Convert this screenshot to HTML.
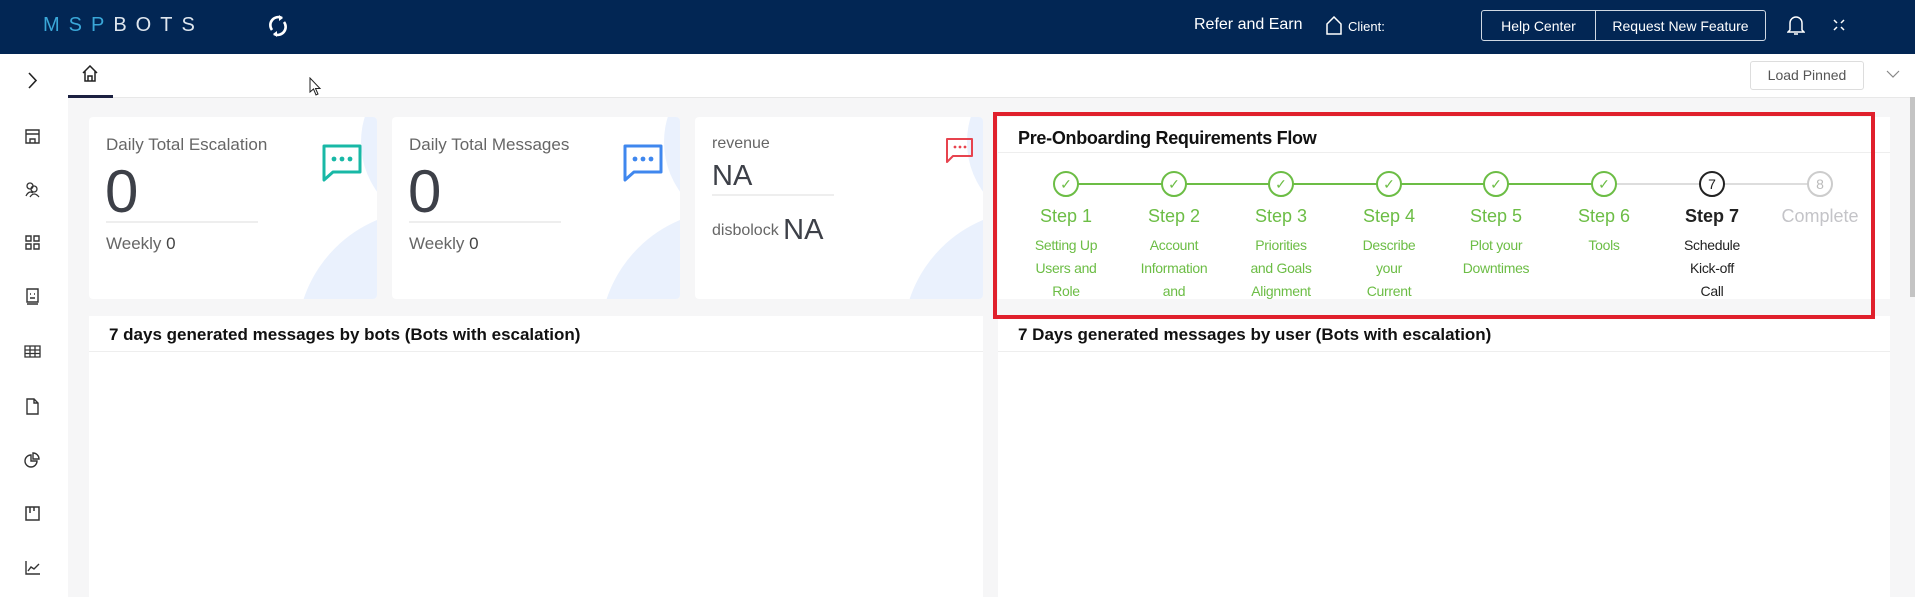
<!DOCTYPE html>
<html><head><meta charset="utf-8"><style>
*{box-sizing:border-box;margin:0;padding:0}
html,body{width:1915px;height:597px;overflow:hidden}
body{background:#f6f6f7;font-family:"Liberation Sans",sans-serif;position:relative}
.abs{position:absolute}
.nav{left:0;top:0;width:1915px;height:54px;background:#022654}
.side{left:0;top:54px;width:68px;height:543px;background:#fff}
.tabs{left:68px;top:54px;width:1847px;height:44px;background:#fff;border-bottom:1px solid #e8e8e8}
.card{background:#fff;border-radius:4px;overflow:hidden}
.t{color:#666;font-size:17px}
.big{color:#3d4048;font-size:60px;line-height:1}
.step{position:absolute;width:110px;text-align:center;margin-left:-55px}
.step .c{width:26px;height:26px;border:2px solid #6cbd45;border-radius:50%;margin:0 auto;color:#6cbd45;font-size:14px;line-height:22px;background:#fff}
.step .l{font-size:18px;color:#6cbd45;margin-top:9px;height:28px}
.step .d{font-size:14px;color:#6cbd45;line-height:23px;letter-spacing:-0.3px}
.si{position:absolute;left:24px;width:17px;height:17px}
.c1{position:absolute;left:272px;top:-60px;width:170px;height:170px;border-radius:50%;background:#eaf1fd}
.c2{position:absolute;left:208px;top:93px;width:260px;height:260px;border-radius:50%;background:#eaf1fd}
</style></head><body>
<div class="abs nav">
 <div class="abs" style="left:43px;top:14px;font-size:20px;letter-spacing:9px;color:#3aa7d8">MSP<span style="color:#dfe6ee">BOTS</span></div>
 <svg class="abs" style="left:268px;top:13px" width="20" height="26" viewBox="0 0 20 26"><path d="M14 5 A8 8 0 0 0 4 17 M6 21 A8 8 0 0 0 16 9" fill="none" stroke="#fff" stroke-width="2.6"/><path d="M11 2 L15 5 L11 8Z M9 24 L5 21 L9 18Z" fill="#fff"/></svg>
 <div class="abs" style="left:1194px;top:16px;color:#fff;font-size:16px">Refer and Earn</div>
 <svg class="abs" style="left:1326px;top:16px" width="16" height="19" viewBox="0 0 16 19"><path d="M1 8 L8 1 L15 8 V18 H1Z" fill="none" stroke="#fff" stroke-width="1.5"/></svg>
 <div class="abs" style="left:1348px;top:19px;color:#fff;font-size:13px">Client:</div>
 <div class="abs" style="left:1481px;top:10px;width:285px;height:31px;border:1px solid #cfd8e3;border-radius:3px;color:#fff;font-size:14px">
  <span class="abs" style="left:0;width:113px;top:7px;text-align:center">Help Center</span>
  <span class="abs" style="left:113px;top:0;height:29px;border-left:1px solid #cfd8e3"></span>
  <span class="abs" style="left:113px;width:171px;top:7px;text-align:center">Request New Feature</span>
 </div>
 <svg class="abs" style="left:1787px;top:14px" width="18" height="22" viewBox="0 0 18 22"><path d="M3 16 V9 A6 6 0 0 1 15 9 V16 L17 18 H1Z M7 20 H11" fill="none" stroke="#fff" stroke-width="1.5"/></svg>
 <svg class="abs" style="left:1833px;top:19px" width="12" height="12" viewBox="0 0 12 12"><path d="M1 1 L4 4 M11 1 L8 4 M1 11 L4 8 M11 11 L8 8" stroke="#fff" stroke-width="1.5"/></svg>
</div>
<div class="abs side">
 <svg class="si" style="top:18px" viewBox="0 0 17 17"><path d="M5 1 L12 8.5 L5 16" fill="none" stroke="#222" stroke-width="1.6"/></svg>
 <svg class="si" style="top:74px" viewBox="0 0 17 17"><path d="M2 2 H15 V15 H2Z M2 6 H15 M6 15 V11 H11 V15" fill="none" stroke="#333" stroke-width="1.4"/></svg>
 <svg class="si" style="top:127px" viewBox="0 0 17 17"><circle cx="6" cy="5" r="3" fill="none" stroke="#333" stroke-width="1.3"/><circle cx="10" cy="8" r="3" fill="none" stroke="#333" stroke-width="1.3"/><path d="M2 15 Q5 9 9 12 M6 16 Q10 10 15 16" fill="none" stroke="#333" stroke-width="1.3"/></svg>
 <svg class="si" style="top:180px" viewBox="0 0 17 17"><path d="M2 2H7V7H2Z M10 2H15V7H10Z M2 10H7V15H2Z M10 10H15V15H10Z" fill="none" stroke="#333" stroke-width="1.4"/></svg>
 <svg class="si" style="top:234px" viewBox="0 0 17 17"><path d="M3 1H14V14H3Z M3 16H14" fill="none" stroke="#333" stroke-width="1.4"/><path d="M6 6H7M10 6H11M6 10H11" stroke="#333" stroke-width="1.4"/></svg>
 <svg class="si" style="top:289px" viewBox="0 0 17 17"><path d="M1 3H16V14H1Z M1 7H16 M1 10.5H16 M6 3V14 M11 3V14" fill="none" stroke="#333" stroke-width="1.3"/></svg>
 <svg class="si" style="top:344px" viewBox="0 0 17 17"><path d="M3 1H10L14 5V16H3Z M10 1V5H14" fill="none" stroke="#333" stroke-width="1.4"/></svg>
 <svg class="si" style="top:397px" viewBox="0 0 17 17"><path d="M7 4 A6 6 0 1 0 13 10 H7Z M9 2 A6 6 0 0 1 15 8 H9Z" fill="none" stroke="#333" stroke-width="1.4"/></svg>
 <svg class="si" style="top:451px" viewBox="0 0 17 17"><path d="M2 2H15V15H2Z M6 2V8 M10 2V6" fill="none" stroke="#333" stroke-width="1.5"/></svg>
 <svg class="si" style="top:505px" viewBox="0 0 17 17"><path d="M2 2V15H16 M4 12 L7 8 L10 10 L15 5" fill="none" stroke="#333" stroke-width="1.4"/></svg>
</div>
<div class="abs tabs">
 <svg class="abs" style="left:14px;top:11px" width="16" height="17" viewBox="0 0 16 17"><path d="M1 8 L8 1 L15 8 M3 6 V16 H13 V6 M6 16 V11 H10 V16" fill="none" stroke="#222" stroke-width="1.5"/></svg>
 <div class="abs" style="left:0;top:41px;width:45px;height:3px;background:#1b2040"></div>
 <svg class="abs" style="left:241px;top:23px" width="14" height="20" viewBox="0 0 14 20"><path d="M1 1 V15 L4.5 12 L7 18 L9 17 L6.5 11.5 L11 11.5Z" fill="#fff" stroke="#222" stroke-width="1"/></svg>
 <div class="abs" style="left:1682px;top:7px;width:114px;height:29px;border:1px solid #ddd;border-radius:3px;font-size:14px;color:#555;text-align:center;line-height:27px">Load Pinned</div>
 <svg class="abs" style="left:1818px;top:16px" width="14" height="9" viewBox="0 0 14 9"><path d="M1 1 L7 7 L13 1" fill="none" stroke="#888" stroke-width="1.2"/></svg>
</div>
<div class="abs" style="left:1910px;top:97px;width:5px;height:200px;background:#c4c4c4"></div>

<div class="abs card" style="left:89px;top:117px;width:288px;height:182px">
 <div class="c1"></div><div class="c2"></div>
 <div class="abs t" style="left:17px;top:18px">Daily Total Escalation</div>
 <div class="abs big" style="left:16px;top:45px">0</div>
 <div class="abs" style="left:17px;top:104px;width:152px;height:2px;background:#eee"></div>
 <div class="abs t" style="left:17px;top:117px">Weekly <span style="color:#444">0</span></div>
 <svg class="abs" style="left:231px;top:25px" width="46" height="44" viewBox="0 0 46 44"><path d="M4 4 H40 V30 H13 L4 38Z" fill="none" stroke="#18b8a6" stroke-width="3" stroke-linejoin="round"/><circle cx="14" cy="17" r="2.4" fill="#18b8a6"/><circle cx="22" cy="17" r="2.4" fill="#18b8a6"/><circle cx="30" cy="17" r="2.4" fill="#18b8a6"/></svg>
</div>
<div class="abs card" style="left:392px;top:117px;width:288px;height:182px">
 <div class="c1"></div><div class="c2"></div>
 <div class="abs t" style="left:17px;top:18px">Daily Total Messages</div>
 <div class="abs big" style="left:16px;top:45px">0</div>
 <div class="abs" style="left:17px;top:104px;width:152px;height:2px;background:#eee"></div>
 <div class="abs t" style="left:17px;top:117px">Weekly <span style="color:#444">0</span></div>
 <svg class="abs" style="left:229px;top:25px" width="46" height="44" viewBox="0 0 46 44"><path d="M4 4 H40 V30 H13 L4 38Z" fill="none" stroke="#3f87ee" stroke-width="3" stroke-linejoin="round"/><circle cx="14" cy="17" r="2.4" fill="#3f87ee"/><circle cx="22" cy="17" r="2.4" fill="#3f87ee"/><circle cx="30" cy="17" r="2.4" fill="#3f87ee"/></svg>
</div>
<div class="abs card" style="left:695px;top:117px;width:288px;height:182px">
 <div class="c1"></div><div class="c2"></div>
 <div class="abs" style="left:17px;top:18px;color:#666;font-size:16px">revenue</div>
 <div class="abs" style="left:17px;top:43px;color:#3d4048;font-size:29px">NA</div>
 <div class="abs" style="left:17px;top:77px;width:122px;height:2px;background:#eee"></div>
 <div class="abs" style="left:17px;top:97px;color:#666;font-size:16px">disbolock <span style="color:#3d4048;font-size:29px;vertical-align:-4px">NA</span></div>
 <svg class="abs" style="left:250px;top:20px" width="30" height="28" viewBox="0 0 30 28"><path d="M2 2 H27 V19 H8 L2 25Z" fill="none" stroke="#e7434e" stroke-width="2" stroke-linejoin="round"/><circle cx="10" cy="10" r="1.4" fill="#e7434e"/><circle cx="15" cy="10" r="1.4" fill="#e7434e"/><circle cx="20" cy="10" r="1.4" fill="#e7434e"/></svg>
</div>

<div class="abs card" style="left:998px;top:117px;width:892px;height:182px;border-radius:0">
 <div class="abs" style="left:20px;top:11px;font-size:18px;font-weight:bold;color:#111;letter-spacing:-0.3px">Pre-Onboarding Requirements Flow</div>
 <div class="abs" style="left:0;top:35px;width:892px;height:1px;background:#eee"></div>
 <div class="abs" style="left:68px;top:66px;width:538px;height:2px;background:#6cbd45"></div>
 <div class="abs" style="left:606px;top:66px;width:216px;height:2px;background:#ddd"></div>
 <div class="step" style="left:68px;top:54px"><div class="c">✓</div><div class="l">Step 1</div><div class="d">Setting Up<br>Users and<br>Role</div></div>
 <div class="step" style="left:176px;top:54px"><div class="c">✓</div><div class="l">Step 2</div><div class="d">Account<br>Information<br>and</div></div>
 <div class="step" style="left:283px;top:54px"><div class="c">✓</div><div class="l">Step 3</div><div class="d">Priorities<br>and Goals<br>Alignment</div></div>
 <div class="step" style="left:391px;top:54px"><div class="c">✓</div><div class="l">Step 4</div><div class="d">Describe<br>your<br>Current</div></div>
 <div class="step" style="left:498px;top:54px"><div class="c">✓</div><div class="l">Step 5</div><div class="d">Plot your<br>Downtimes</div></div>
 <div class="step" style="left:606px;top:54px"><div class="c">✓</div><div class="l">Step 6</div><div class="d">Tools</div></div>
 <div class="step" style="left:714px;top:54px"><div class="c" style="border-color:#222;color:#222">7</div><div class="l" style="color:#222;font-weight:bold">Step 7</div><div class="d" style="color:#222">Schedule<br>Kick-off<br>Call</div></div>
 <div class="step" style="left:822px;top:54px"><div class="c" style="border-color:#ccc;color:#bbb">8</div><div class="l" style="color:#c4c4c8">Complete</div></div>
</div>

<div class="abs card" style="left:89px;top:316px;width:894px;height:281px;border-radius:0">
 <div class="abs" style="left:20px;top:9px;font-size:17px;font-weight:bold;color:#111">7 days generated messages by bots (Bots with escalation)</div>
 <div class="abs" style="left:0;top:35px;width:894px;height:1px;background:#eee"></div>
</div>
<div class="abs card" style="left:998px;top:316px;width:892px;height:281px;border-radius:0">
 <div class="abs" style="left:20px;top:9px;font-size:17px;font-weight:bold;color:#111">7 Days generated messages by user (Bots with escalation)</div>
 <div class="abs" style="left:0;top:35px;width:892px;height:1px;background:#eee"></div>
</div>
<div class="abs" style="left:993px;top:112px;width:882px;height:207px;border:4px solid #e0202c"></div>
</body></html>
